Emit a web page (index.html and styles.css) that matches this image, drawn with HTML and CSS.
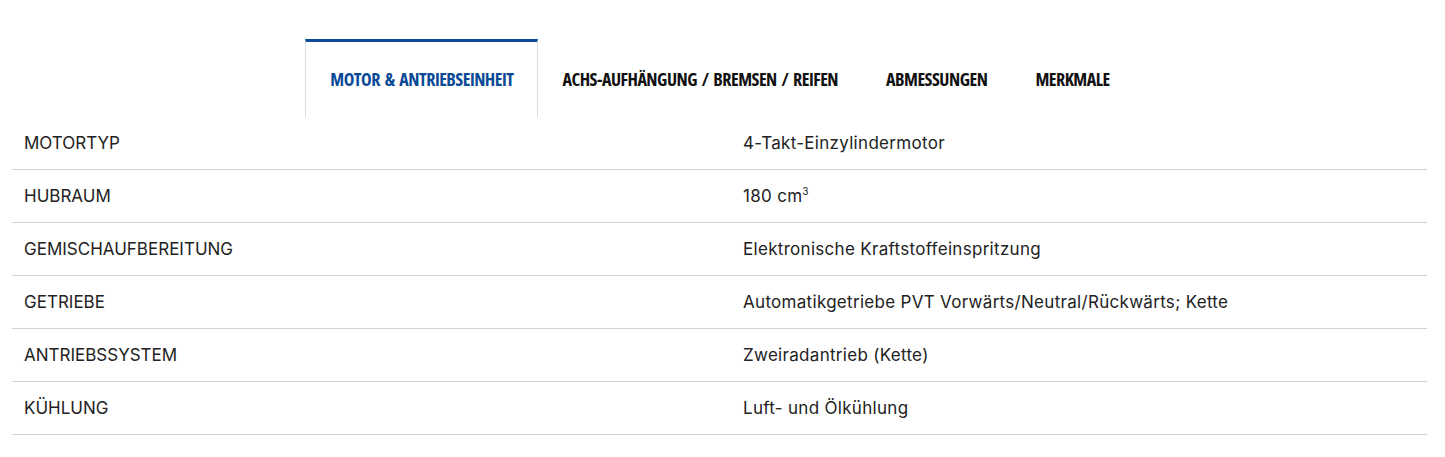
FILE: index.html
```html
<!DOCTYPE html>
<html lang="de">
<head>
<meta charset="utf-8">
<title>Technische Daten</title>
<link rel="stylesheet" href="styles.css">
</head>
<body>
<div class="specs">
  <nav class="tabs">
    <div class="tab active">MOTOR &amp; ANTRIEBSEINHEIT</div>
    <div class="tab">ACHS-AUFHÄNGUNG / BREMSEN / REIFEN</div>
    <div class="tab">ABMESSUNGEN</div>
    <div class="tab">MERKMALE</div>
  </nav>
  <div class="table">
    <div class="row"><div class="label">MOTORTYP</div><div class="value">4-Takt-Einzylindermotor</div></div>
    <div class="row"><div class="label">HUBRAUM</div><div class="value">180 cm<sup>3</sup></div></div>
    <div class="row"><div class="label">GEMISCHAUFBEREITUNG</div><div class="value">Elektronische Kraftstoffeinspritzung</div></div>
    <div class="row"><div class="label">GETRIEBE</div><div class="value">Automatikgetriebe PVT Vorwärts/Neutral/Rückwärts; Kette</div></div>
    <div class="row"><div class="label">ANTRIEBSSYSTEM</div><div class="value">Zweiradantrieb (Kette)</div></div>
    <div class="row"><div class="label">KÜHLUNG</div><div class="value">Luft- und Ölkühlung</div></div>
  </div>
</div>
</body>
</html>
```
FILE: styles.css
```css
* { box-sizing: border-box; }
body {
  margin: 0;
  background: #fff;
  color: #222;
  font-family: Inter, "Noto Sans", sans-serif;
}
.specs {
  padding: 39px 18px 0 12px;
}
.tabs {
  display: flex;
  justify-content: center;
}
.tab {
  height: 78px;
  padding: 0 0 2px;
  margin: 0 24px;
  display: flex;
  align-items: center;
  font-family: "Open Sans", Roboto, sans-serif;
  font-stretch: 75%;
  font-weight: 700;
  font-size: 18px;
  letter-spacing: -0.5px;
  word-spacing: 2px;
  color: #111;
  border-top: 3px solid transparent;
  white-space: nowrap;
}
.tab.active {
  margin: 0;
  padding: 0 24px 2px;
  color: #0a4a96;
  border-top-color: #0a4a96;
  border-left: 1px solid #dcdcdc;
  border-right: 1px solid #dcdcdc;
}
.table {
  display: flex;
  flex-direction: column;
}
.row {
  display: grid;
  grid-template-columns: 719px 1fr;
  height: 53px;
  align-items: center;
  border-bottom: 1px solid #d2d2d2;
  font-size: 17px;
}
.label {
  padding-left: 12px;
}
.value {
  padding-left: 12px;
  letter-spacing: 0.3px;
}
.value sup {
  font-size: 10px;
  vertical-align: 7px;
  line-height: 0;
}
```
